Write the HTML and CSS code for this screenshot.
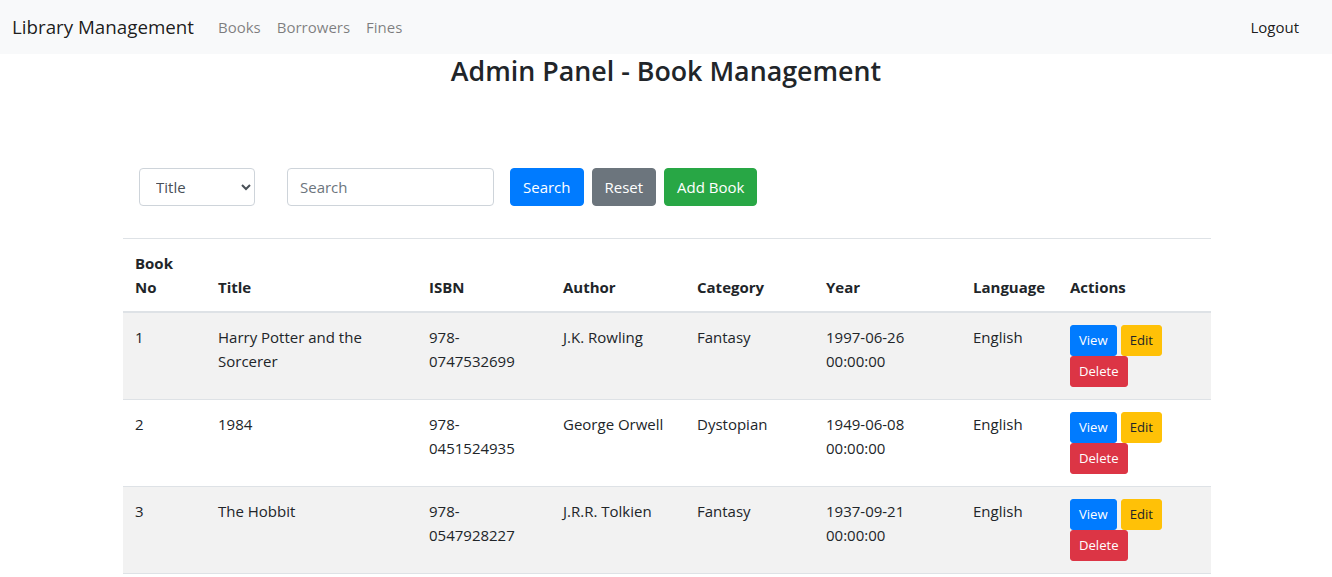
FILE: index.html
```html
<!DOCTYPE html>
<html lang="en">
<head>
<meta charset="utf-8">
<title>Library Management</title>
<link rel="stylesheet" href="styles.css">
</head>
<body>
<nav class="navbar">
  <a class="brand" href="#">Library Management</a>
  <ul class="nav">
    <li><a class="nav-link" href="#">Books</a></li>
    <li><a class="nav-link" href="#">Borrowers</a></li>
    <li><a class="nav-link" href="#">Fines</a></li>
  </ul>
  <ul class="nav nav-right">
    <li><a class="nav-link nav-link-dark" href="#">Logout</a></li>
  </ul>
</nav>

<h3 class="page-title">Admin Panel - Book Management</h3>

<main class="container">
  <form class="search-form">
    <select class="form-control select-field">
      <option>Title</option>
      <option>Author</option>
      <option>ISBN</option>
    </select>
    <input class="form-control search-field" type="text" placeholder="Search">
    <button type="button" class="btn btn-primary">Search</button>
    <button type="button" class="btn btn-secondary">Reset</button>
    <button type="button" class="btn btn-success">Add Book</button>
  </form>

  <table class="table">
    <colgroup>
      <col class="c-no"><col class="c-title"><col class="c-isbn"><col class="c-author">
      <col class="c-cat"><col class="c-year"><col class="c-lang"><col class="c-act">
    </colgroup>
    <thead>
      <tr>
        <th>Book No</th><th>Title</th><th>ISBN</th><th>Author</th>
        <th>Category</th><th>Year</th><th>Language</th><th>Actions</th>
      </tr>
    </thead>
    <tbody>
      <tr>
        <td>1</td><td>Harry Potter and the Sorcerer</td><td>978-0747532699</td><td>J.K. Rowling</td>
        <td>Fantasy</td><td>1997-06-26 00:00:00</td><td>English</td>
        <td><div class="actions"><button class="btn btn-sm btn-primary">View</button><button class="btn btn-sm btn-warning">Edit</button><button class="btn btn-sm btn-danger">Delete</button></div></td>
      </tr>
      <tr>
        <td>2</td><td>1984</td><td>978-0451524935</td><td>George Orwell</td>
        <td>Dystopian</td><td>1949-06-08 00:00:00</td><td>English</td>
        <td><div class="actions"><button class="btn btn-sm btn-primary">View</button><button class="btn btn-sm btn-warning">Edit</button><button class="btn btn-sm btn-danger">Delete</button></div></td>
      </tr>
      <tr>
        <td>3</td><td>The Hobbit</td><td>978-0547928227</td><td>J.R.R. Tolkien</td>
        <td>Fantasy</td><td>1937-09-21 00:00:00</td><td>English</td>
        <td><div class="actions"><button class="btn btn-sm btn-primary">View</button><button class="btn btn-sm btn-warning">Edit</button><button class="btn btn-sm btn-danger">Delete</button></div></td>
      </tr>
    </tbody>
  </table>
</main>
</body>
</html>
```

FILE: styles.css
```css
* { box-sizing: border-box; }

body {
  margin: 0;
  font-family: "Open Sans", "Noto Sans", sans-serif;
  font-size: 15px;
  line-height: 24px;
  color: #212529;
  background: #fff;
}

a { text-decoration: none; }

.navbar {
  display: flex;
  align-items: center;
  background: #f8f9fa;
  padding: 7px 12px;
}

.brand {
  font-size: 18.75px;
  line-height: 30px;
  padding: 5px 0;
  margin-right: 16px;
  color: rgba(0, 0, 0, .9);
}

.nav {
  display: flex;
  list-style: none;
  margin: 0;
  padding: 0;
}

.nav-right { margin-left: auto; margin-right: 13px; }

.nav-link {
  display: block;
  padding: 8px;
  color: rgba(0, 0, 0, .5);
}

.nav-link-dark { color: rgba(0, 0, 0, .9); }

.page-title {
  margin: 0 0 8px;
  text-align: center;
  font-size: 26.8px;
  font-weight: 600;
  line-height: 34px;
}

.container {
  width: 1088px;
  margin: 0 0 0 123px;
}

.search-form {
  display: flex;
  align-items: center;
  margin: 80px 0 32px;
  padding-left: 16px;
}

.form-control {
  height: 38px;
  padding: 6px 12px;
  font-family: inherit;
  font-size: 15px;
  line-height: 24px;
  color: #495057;
  background: #fff;
  border: 1px solid #ced4da;
  border-radius: 4px;
}

.form-control::placeholder { color: #6c757d; }

.select-field { width: 116px; margin-right: 32px; }
.search-field { width: 207px; margin-right: 16px; }

.btn {
  display: inline-block;
  font-family: inherit;
  font-size: 15px;
  line-height: 24px;
  padding: 6px 12px;
  border: 1px solid transparent;
  border-radius: 4px;
  color: #fff;
  cursor: pointer;
}

.search-form .btn { margin-right: 8px; }

.btn-primary { background: #007bff; border-color: #007bff; }
.btn-secondary { background: #6c757d; border-color: #6c757d; }
.btn-success { background: #28a745; border-color: #28a745; }
.btn-warning { background: #ffc107; border-color: #ffc107; color: #212529; }
.btn-danger { background: #dc3545; border-color: #dc3545; }

.btn-sm {
  font-size: 13.1px;
  line-height: 21px;
  padding: 4px 8px;
  border-radius: 3px;
}

.table {
  width: 100%;
  table-layout: fixed;
  border-collapse: collapse;
  color: #212529;
}

.c-no { width: 83px; }
.c-title { width: 211px; }
.c-isbn { width: 134px; }
.c-author { width: 134px; }
.c-cat { width: 129px; }
.c-year { width: 147px; }
.c-lang { width: 97px; }
.c-act { width: 153px; }

.table th,
.table td {
  padding: 12px;
  text-align: left;
  vertical-align: top;
  border-top: 1px solid #dee2e6;
}

.table th {
  font-weight: 700;
  vertical-align: bottom;
  border-bottom: 2px solid #dee2e6;
}

.table tbody tr:nth-child(odd) { background: rgba(0, 0, 0, .05); }
.table tbody tr:last-child td { border-bottom: 1px solid #dee2e6; }

.actions {
  display: flex;
  flex-wrap: wrap;
  column-gap: 4px;
}
```
